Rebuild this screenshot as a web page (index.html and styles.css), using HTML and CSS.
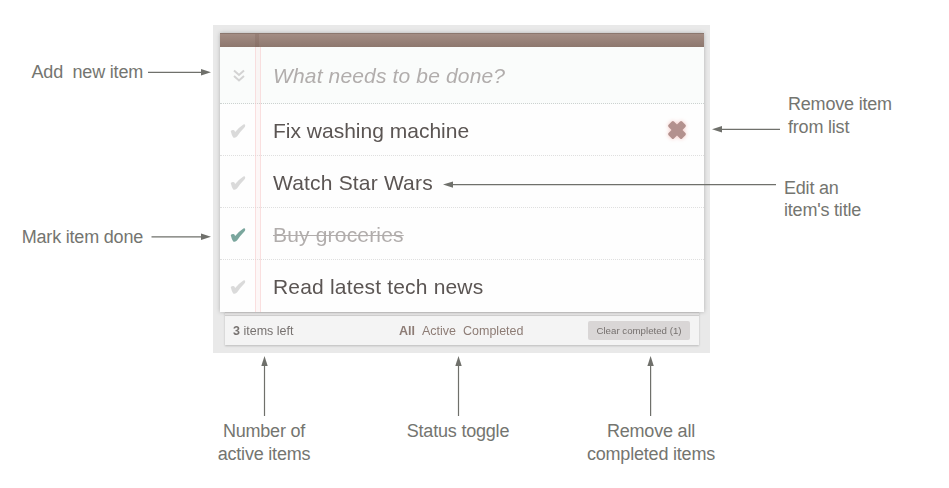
FILE: index.html
```html
<!DOCTYPE html>
<html lang="en">
<head>
<meta charset="utf-8">
<title>Todo list overview</title>
<link rel="stylesheet" href="styles.css">
</head>
<body>
<svg class="defs" width="0" height="0">
  <symbol id="check" viewBox="0 0 16 16"><path d="M.7 8.1Q2.400 6.300 4.200 7.200L5.200 9.100Q8.700 4.500 13.400 1.500Q15 1 15.100 2Q15.400 3.400 14.600 4.300Q10.500 8.500 7.200 13.300Q5.700 15.300 3.200 14.500Q1.600 12.200.7 8.100Z"/></symbol>
</svg>
<main class="diagram">
  <aside class="notes notes-left">
    <p class="note">Add&nbsp; new item</p>
    <p class="note note-done">Mark item done</p>
  </aside>
  <section class="app">
    <div class="card">
      <div class="bar"></div>
      <div class="row entry">
        <span class="mark"><svg width="12" height="14" viewBox="0 0 12 14"><path class="chevrons" d="M1 1.500 6 6 11 1.500M1 7 6 11.500 11 7"/></svg></span>
        <span class="title">What needs to be done?</span>
      </div>
      <div class="row"><span class="mark"><svg width="16" height="16"><use href="#check"/></svg></span><span class="title">Fix washing machine</span>
        <svg class="remove" width="22" height="22" viewBox="0 0 22 22"><g transform="rotate(45 11 11)"><rect x="1.400" y="7.200" width="19.200" height="7.600" rx="1.500"/><rect x="7.200" y="1.400" width="7.600" height="19.200" rx="1.500"/></g></svg></div>
      <div class="row"><span class="mark"><svg width="16" height="16"><use href="#check"/></svg></span><span class="title spaced">Watch Star Wars</span></div>
      <div class="row done"><span class="mark"><svg width="16" height="16"><use href="#check"/></svg></span><span class="title spaced">Buy groceries</span></div>
      <div class="row"><span class="mark"><svg width="16" height="16"><use href="#check"/></svg></span><span class="title spaced">Read latest tech news</span></div>
    </div>
    <footer class="footer">
      <span class="count"><b>3</b> items left</span>
      <nav class="filters"><b>All</b><span>Active</span><span>Completed</span></nav>
      <button class="clear">Clear completed (1)</button>
    </footer>
  </section>
  <aside class="notes notes-right">
    <p class="note">Remove item<br>from list</p>
    <p class="note note-edit">Edit an<br>item's title</p>
  </aside>
  <div class="notes-bottom">
    <p class="note">Number of<br>active items</p>
    <p class="note">Status toggle</p>
    <p class="note">Remove all<br>completed items</p>
  </div>
  <svg class="arrows" width="949" height="488" viewBox="0 0 949 488">
    <defs><marker id="head" markerUnits="userSpaceOnUse" markerWidth="10" markerHeight="7" refX="0" refY="3.500" orient="auto"><path d="M0 .3 10 3.500 0 6.700Z"/></marker></defs>
    <path d="M148 72.300H201"/>
    <path d="M151.500 236.800H201"/>
    <path d="M780 129.300H722"/>
    <path d="M776 184.600H453"/>
    <path d="M264.500 416V366"/>
    <path d="M458.500 416V366"/>
    <path d="M650.600 416V366"/>
  </svg>
</main>
</body>
</html>
```
FILE: styles.css
```css
* { box-sizing: border-box; }
body { margin: 0; background: #fff; font-family: "Liberation Sans", Arial, sans-serif; }
.defs { position: absolute; }
.diagram {
  position: relative;
  width: 949px;
  height: 488px;
  padding-top: 25px;
  display: grid;
  grid-template-columns: 213px 497px 239px;
  grid-template-rows: 328px 1fr;
}
.note { margin: 0; font-size: 18px; letter-spacing: -.2px; line-height: 23px; color: #747570; white-space: nowrap; }
.notes-left { padding: 36px 70px 0 0; text-align: right; }
.note-done { margin-top: 142px; }
.notes-right { padding: 68px 0 0 78px; }
.note-edit { margin: 38px 0 0 -4px; line-height: 22px; }
.notes-bottom {
  grid-column: 1 / -1;
  display: grid;
  grid-template-columns: 194px 194px 192px;
  padding: 67px 0 0 167px;
  text-align: center;
}
.app {
  padding: 8px 6px 8px 7px;
  background: #e9e9e9;
}
.card {
  position: relative;
  height: 279px;
  background: #fefefe;
  box-shadow: 0 0 4px rgba(0,0,0,.25);
}
.card::after {
  content: "";
  position: absolute;
  left: 35px;
  top: 0;
  width: 4px;
  height: 100%;
  border: solid rgba(248,200,200,.5);
  border-width: 0 1px;
  background: rgba(250,210,210,.15);
}
.bar {
  position: relative;
  z-index: 1;
  height: 14px;
  background: linear-gradient(90deg, transparent 35px, rgba(110,80,70,.2) 35px 39px, transparent 39px), linear-gradient(#a38c83, #8d786e);
  border-top: 1px solid #8b776e;
}
.row {
  height: 52px;
  display: flex;
  align-items: center;
  border-bottom: 1px dotted #dfdfdf;
}
.row:last-child { border-bottom: 0; }
.entry { height: 57px; background: #fafcfb; border-bottom-color: #ccd2d0; }
.mark { width: 53px; padding: 2px 0 0 10px; display: flex; filter: blur(.5px); fill: #dadada; }
.entry .mark { padding-left: 13px; }
.chevrons { fill: none; stroke: #d3d3d3; stroke-width: 2; }
.title {
  padding-top: 2px;
  font-size: 21px;
  color: #5b5553;
  filter: blur(.5px);
  white-space: nowrap;
}
.spaced { letter-spacing: .18px; }
.entry .title { font-style: italic; color: #b1adac; letter-spacing: .15px; }
.done .title { color: #b1adac; text-decoration: line-through; text-decoration-thickness: 1px; }
.done .mark { fill: #7aa69d; }
.remove {
  margin: 0 16px 0 auto;
  fill: #b3918e;
  filter: blur(.4px) drop-shadow(0 0 2px #f4c4c0);
}
.footer {
  height: 33px;
  margin: 0 5px;
  padding: 4px 9px 0 8px;
  display: grid;
  grid-template-columns: 166px 1fr auto;
  align-items: center;
  background: linear-gradient(#d3d2d2 0 1px, #e7e6e6 1px 3px, #d1d0d0 3px 4px, #f4f4f4 4px);
  box-shadow: 0 1px 2px rgba(0,0,0,.2);
  font-size: 12.5px;
  color: #777270;
}
.count, .filters { filter: blur(.35px); }
.filters { display: flex; gap: 7px; color: #8d7c75; }
.clear {
  width: 102px;
  height: 19px;
  padding: 0;
  border: 0;
  border-radius: 2px;
  background: #d9d6d6;
  font: 9.7px "Liberation Sans", Arial, sans-serif;
  color: #75706e;
  filter: blur(.3px);
  white-space: nowrap;
}
.arrows { position: absolute; left: 0; top: 0; fill: #6f706b; }
.arrows > path { fill: none; stroke: #6f706b; stroke-width: 1.2; marker-end: url(#head); }
```
